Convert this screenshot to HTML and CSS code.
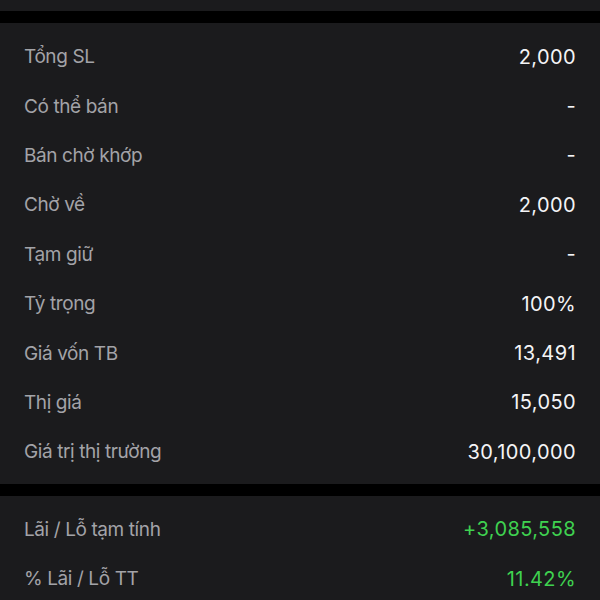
FILE: index.html
```html
<!DOCTYPE html>
<html lang="vi">
<head>
<meta charset="utf-8">
<link rel="stylesheet" href="styles.css">
</head>
<body>
<div class="screen">
  <div class="panel top-stub"></div>
  <div class="panel">
    <div class="row"><span class="label">Tổng SL</span><span class="value">2,000</span></div>
    <div class="row"><span class="label">Có thể bán</span><span class="value">-</span></div>
    <div class="row"><span class="label">Bán chờ khớp</span><span class="value">-</span></div>
    <div class="row"><span class="label">Chờ về</span><span class="value">2,000</span></div>
    <div class="row"><span class="label">Tạm giữ</span><span class="value">-</span></div>
    <div class="row"><span class="label">Tỷ trọng</span><span class="value">100%</span></div>
    <div class="row"><span class="label">Giá vốn TB</span><span class="value">13,491</span></div>
    <div class="row"><span class="label">Thị giá</span><span class="value">15,050</span></div>
    <div class="row"><span class="label">Giá trị thị trường</span><span class="value">30,100,000</span></div>
  </div>
  <div class="panel">
    <div class="row"><span class="label">Lãi / Lỗ tạm tính</span><span class="value up">+3,085,558</span></div>
    <div class="row"><span class="label">% Lãi / Lỗ TT</span><span class="value up">11.42%</span></div>
  </div>
</div>
</body>
</html>
```
FILE: styles.css
```css
* { box-sizing: border-box; }
html, body {
  margin: 0;
  padding: 0;
  background: #000;
  height: 600px;
  overflow: hidden;
}
.screen {
  display: flex;
  flex-direction: column;
  gap: 12px;
  font-family: Inter, "Noto Sans", sans-serif;
  font-size: 19px;
}
.panel {
  background: #1b1b1d;
  padding: 9px 24px 7px;
}
.top-stub {
  height: 11px;
  padding: 0;
}
.row {
  height: 49.4px;
  display: flex;
  align-items: center;
  justify-content: space-between;
}
.label {
  color: #a3a3a8;
  letter-spacing: -0.4px;
}
.value {
  color: #f4f4f6;
  font-size: 20px;
  letter-spacing: 0.4px;
}
.value.up {
  color: #3fd150;
}
```
